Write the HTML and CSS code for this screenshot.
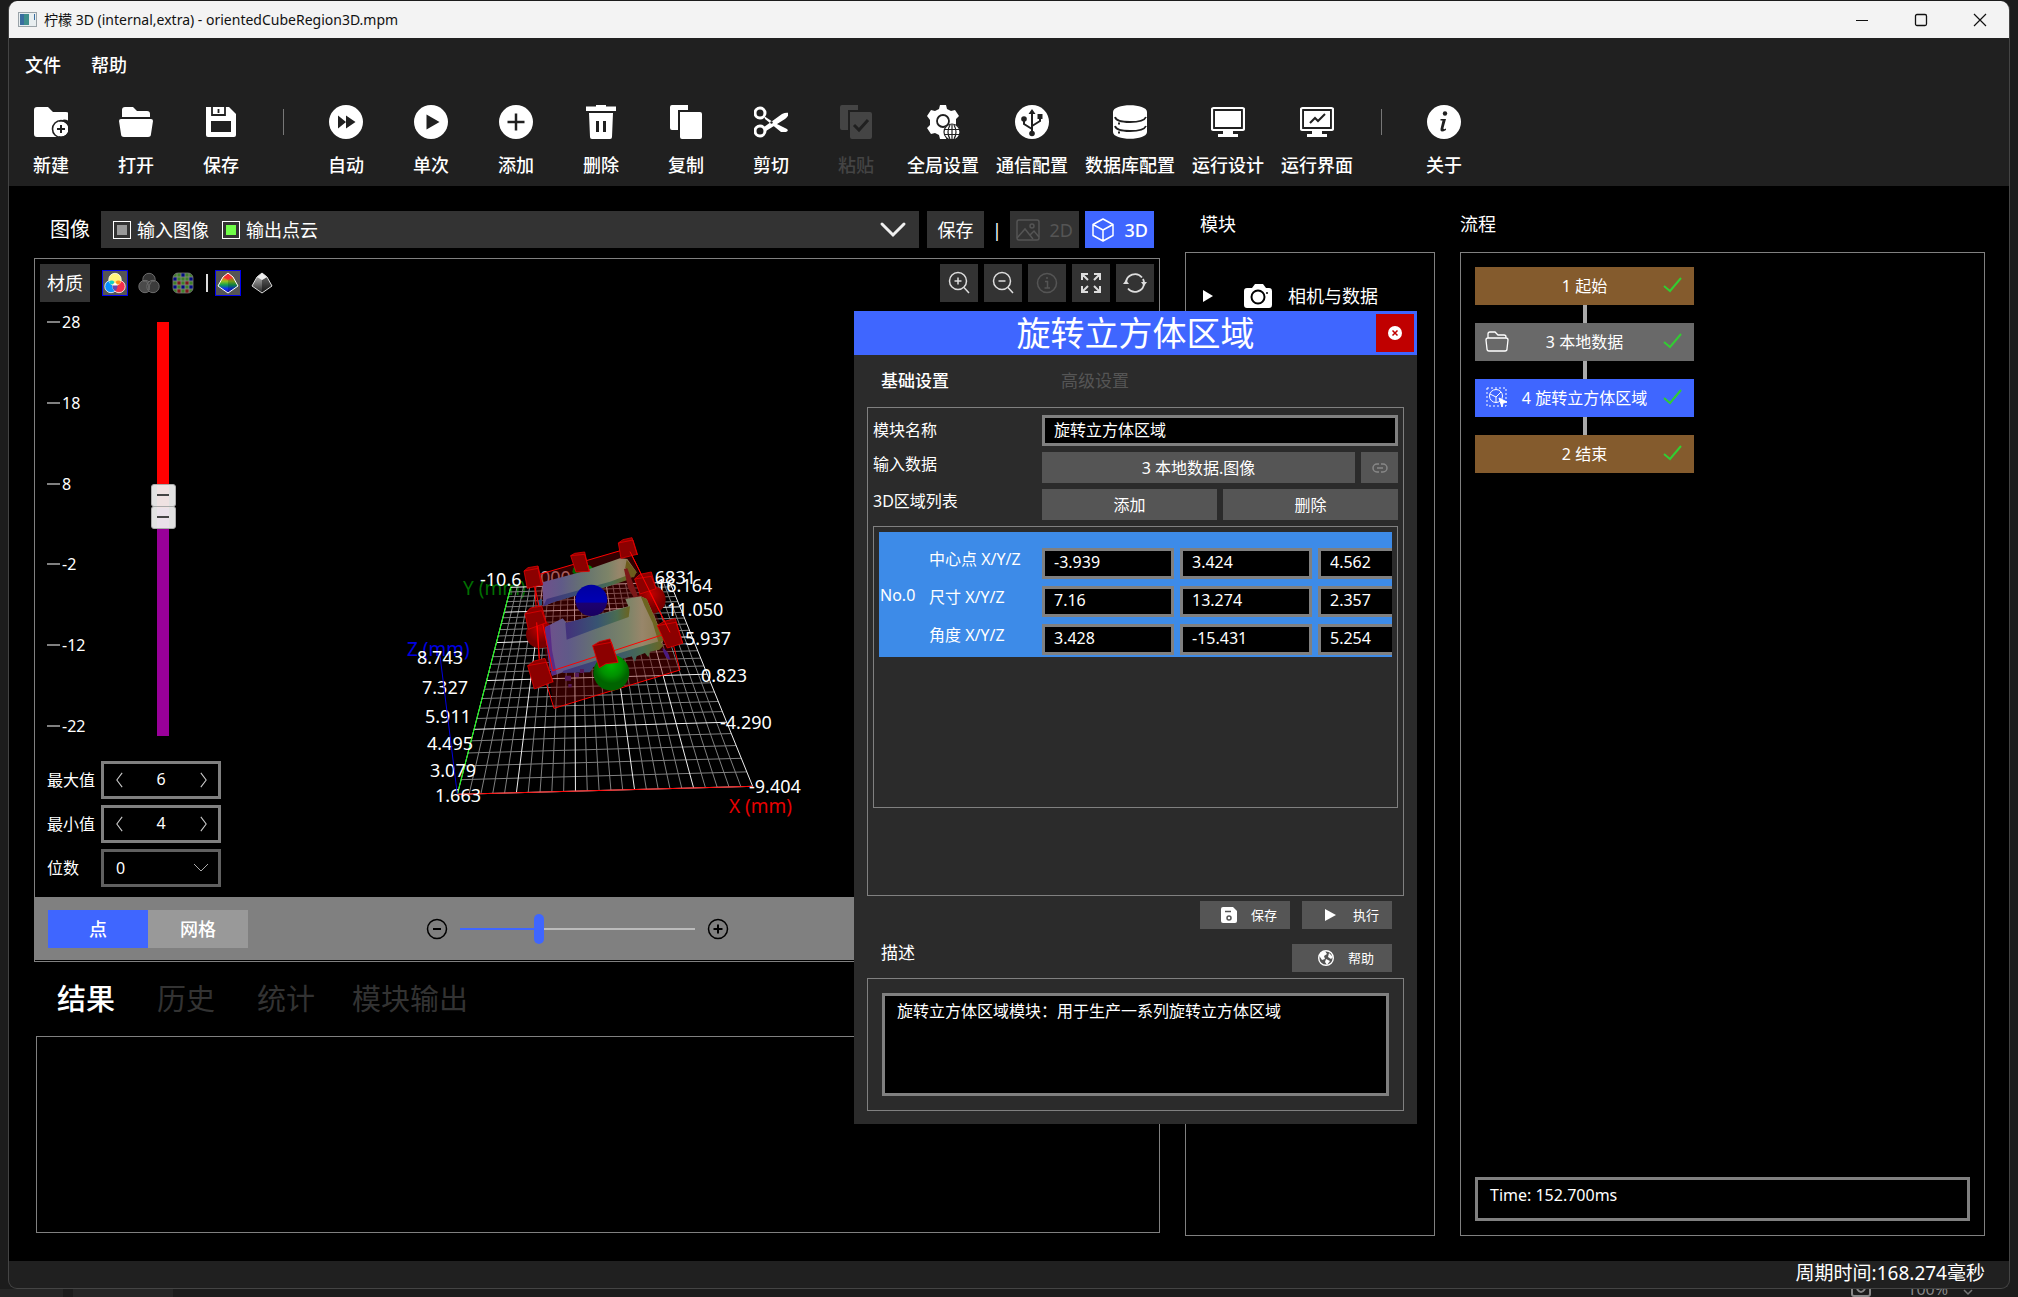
FILE: index.html
```html
<!DOCTYPE html>
<html lang="zh-CN">
<head>
<meta charset="utf-8">
<title>柠檬 3D</title>
<link rel="stylesheet" href="styles.css">
</head>
<body>
<div class="window">
  <header class="titlebar">
    <svg class="app-icon" width="19" height="15" viewBox="0 0 19 15"><rect width="19" height="15" fill="#9aa3a8"/><rect x="1" y="1" width="17" height="13" fill="#e8eef0"/><rect x="2" y="2" width="9" height="11" fill="#3f8f8c"/><rect x="2" y="2" width="4" height="11" fill="#3a6ea0"/><rect x="16" y="2" width="1" height="6" fill="#3a6ea0"/></svg>
    <h1 class="title">柠檬 3D (internal,extra) - orientedCubeRegion3D.mpm</h1>
    <div class="win-buttons">
      <button aria-label="最小化"><svg width="14" height="14" viewBox="0 0 14 14"><path d="M1 7.5h12" stroke="#111"/></svg></button>
      <button aria-label="最大化"><svg width="14" height="14" viewBox="0 0 14 14"><rect x="1.500" y="1.500" width="11" height="11" rx="1.500" fill="none" stroke="#111" stroke-width="1.300"/></svg></button>
      <button aria-label="关闭"><svg width="14" height="14" viewBox="0 0 14 14"><path d="M1 1l12 12M13 1L1 13" stroke="#111" stroke-width="1.200"/></svg></button>
    </div>
  </header>

  <nav class="menubar"><button>文件</button><button>帮助</button></nav>

  <div class="toolbar">
    <button class="tool"><svg viewBox="0 0 34 34"><path d="M3 2h11l5 5h13q3 0 3 3v6a9 9 0 0 0-12 13l2 3H3q-3 0-3-3V5q0-3 3-3z" fill="#fff"/><circle cx="27" cy="24" r="7.500" fill="#fff"/><circle cx="27" cy="24" r="8.500" fill="none" stroke="#202020" stroke-width="1.600"/><path d="M27 20v8M23 24h8" stroke="#202020" stroke-width="2"/></svg>新建</button>
    <button class="tool"><svg viewBox="0 0 34 34"><path d="M3 12V5q0-3 3-3h8l4 4h10q3 0 3 3v3zM2 14h30q2 0 2 2l-2 13q0 3-3 3H5q-3 0-3-3L0 16q0-2 2-2z" fill="#fff"/></svg>打开</button>
    <button class="tool"><svg viewBox="0 0 34 34"><path d="M2 2h23l7 7v21q0 2-2 2H4q-2 0-2-2z" fill="#fff"/><path d="M8 2v8h13V2M14.500 4v4" fill="none" stroke="#202020" stroke-width="1.800"/><rect x="7" y="16" width="20" height="11" fill="#202020"/></svg>保存</button>
    <span class="sep"></span>
    <button class="tool"><svg viewBox="0 0 34 34"><circle cx="17" cy="17" r="17" fill="#fff"/><path d="M9 10.500l8 6.500-8 6.500zM17 10.500l9.500 6.500-9.500 6.500z" fill="#202020"/></svg>自动</button>
    <button class="tool"><svg viewBox="0 0 34 34"><circle cx="17" cy="17" r="17" fill="#fff"/><path d="M12.500 9.500v15L25.500 17z" fill="#202020"/></svg>单次</button>
    <button class="tool"><svg viewBox="0 0 34 34"><circle cx="17" cy="17" r="17" fill="#fff"/><path d="M17 8.500v17M8.500 17h17" stroke="#202020" stroke-width="2.500"/></svg>添加</button>
    <button class="tool"><svg viewBox="0 0 34 34"><path d="M2 1.500h10V0h10v1.500h10V6H2zM5 8h24l-1 24q0 2-2 2H8q-2 0-2-2z" fill="#fff"/><path d="M13.500 16v11M20.500 16v11" stroke="#202020" stroke-width="3"/></svg>删除</button>
    <button class="tool"><svg viewBox="0 0 34 34"><path d="M3 0h16v5H9v20H3q-2 0-2-2V2q0-2 2-2zM12 7h19q2 0 2 2v23q0 2-2 2H13q-2 0-2-2V7z" fill="#fff"/></svg>复制</button>
    <button class="tool"><svg viewBox="0 0 34 34"><g fill="none" stroke="#fff" stroke-width="3"><circle cx="6" cy="8" r="5"/><circle cx="6" cy="26" r="5"/></g><path d="M10 22L28 9q4-2 7-1-1 4-4 6L12 26zM10 11l9 6 14 7q2 2-1 3h-5L11 14z" fill="#fff"/><circle cx="17.500" cy="17.500" r="1.200" fill="#202020"/></svg>剪切</button>
    <button class="tool" disabled><svg viewBox="0 0 34 34"><path d="M3 0h16v5H9v20H3q-2 0-2-2V2q0-2 2-2zM12 7h19q2 0 2 2v23q0 2-2 2H13q-2 0-2-2V7z" fill="#444"/><path d="M15 20l5 5 9-10" fill="none" stroke="#202020" stroke-width="3"/></svg>粘贴</button>
    <button class="tool"><svg viewBox="0 0 34 34"><path d="M13 4l1-4h6l1 4 4 2 4-1 4 6-3 3v6l3 3-3 6-5-1-4 2-1 4h-6l-1-4-4-2-4 1-4-6 3-3v-5L1 11l4-6 4 1z" fill="#fff"/><circle cx="17" cy="16" r="6" fill="none" stroke="#202020" stroke-width="1.800"/><circle cx="26" cy="27" r="8" fill="#fff" stroke="#202020" stroke-width="1.200"/><path d="M18.500 24.500h15M18.500 29.500h15M26 19.500v15M24 20q-4 7 0 14M28 20q4 7 0 14" fill="none" stroke="#202020" stroke-width="1.200"/></svg>全局设置</button>
    <button class="tool"><svg viewBox="0 0 34 34"><circle cx="17" cy="17" r="17" fill="#fff"/><path d="M17 7v22M17 24l-8-5v-5M17 21l8-5v-4" fill="none" stroke="#202020" stroke-width="2"/><path d="M17 4l3.500 5h-7zM22.500 9h5v5h-5z" fill="#202020"/><circle cx="9" cy="14" r="2.800" fill="#202020"/><circle cx="17" cy="28.500" r="2.800" fill="#202020"/></svg>通信配置</button>
    <button class="tool"><svg viewBox="0 0 34 34"><path d="M0 7C0-2 34-2 34 7v20c0 9-34 9-34 0z" fill="#fff"/><path d="M2 12q1 5 15 5t16-5M2 21q1 5 15 5t16-5" fill="none" stroke="#202020" stroke-width="1.800"/><path d="M5 18.500h2M5 27.500h2" stroke="#202020" stroke-width="2"/></svg>数据库配置</button>
    <button class="tool"><svg viewBox="0 0 34 34"><rect x="1" y="3" width="32" height="22" rx="1.500" fill="none" stroke="#fff" stroke-width="2.200"/><rect x="4" y="6" width="26" height="16" fill="#fff"/><path d="M12 26h10v3h5v3H7v-3h5z" fill="#fff"/></svg>运行设计</button>
    <button class="tool"><svg viewBox="0 0 34 34"><rect x="1" y="3" width="32" height="22" rx="1.500" fill="none" stroke="#fff" stroke-width="2.200"/><rect x="4" y="6" width="26" height="16" fill="#fff"/><path d="M10 18l5-5 3 3 7-7" fill="none" stroke="#202020" stroke-width="2"/><path d="M12 26h10v3h5v3H7v-3h5z" fill="#fff"/></svg>运行界面</button>
    <span class="sep"></span>
    <button class="tool"><svg viewBox="0 0 34 34"><circle cx="17" cy="17" r="17" fill="#fff"/><circle cx="18" cy="8.500" r="2.200" fill="#202020"/><path d="M13.500 14h5.500l-2.500 9q-.5 2 2.500.5v1.500q-6 3.500-5.500-1l2-8.500h-2z" fill="#202020"/></svg>关于</button>
  </div>

  <main class="main">
    <section class="left">
      <div class="image-bar">
        <h2 class="image-label">图像</h2>
        <div class="source">
          <label class="swatch"><input type="checkbox" class="gray">输入图像</label>
          <label class="swatch"><input type="checkbox" class="green" checked>输出点云</label>
          <button class="source-open" aria-label="展开"><svg width="28" height="18" viewBox="0 0 28 18"><path d="M3 3l11 11L25 3" fill="none" stroke="#f0f0f0" stroke-width="3" stroke-linecap="round"/></svg></button>
        </div>
        <button class="btn save">保存</button>
        <span class="bar">|</span>
        <div class="modes">
          <button class="btn mode" disabled><svg width="24" height="24" viewBox="0 0 24 24" fill="none" stroke="#555" stroke-width="1.500"><rect x="1" y="2" width="22" height="20" rx="2"/><circle cx="16" cy="8" r="2"/><path d="M1 20l8-9 8 10M14 17l4-4 5 6"/></svg>2D</button>
          <button class="btn mode active"><svg width="24" height="24" viewBox="0 0 24 24" fill="none" stroke="#fff" stroke-width="1.500" stroke-linejoin="round"><path d="M12 1l10 5.500v11L12 23 2 17.500v-11zM2 6.500L12 12l10-5.500M12 12v11"/></svg>3D</button>
        </div>
      </div>

      <div class="viewer">
        <div class="viewer-bar">
          <button class="btn material">材质</button>
          <div class="shades">
            <button class="shade on" aria-label="彩色"><svg viewBox="0 0 22 22"><g stroke="#fff" stroke-width=".8"><circle cx="7" cy="14.500" r="6.200" fill="#0a90ff"/><circle cx="15" cy="14.500" r="6.200" fill="#f5304c"/><circle cx="11" cy="7.500" r="6.200" fill="#fff47c"/></g><path d="M5 9.500q3-2 5.500.5-1 3-4 2.500z" fill="#12d0c8"/><path d="M17 9.500q-3-2-5.500.5 1 3 4 2.500z" fill="#ff9020"/><path d="M9 12.500l2-2 2 2-1 1.500h-2z" fill="#fff"/><path d="M8.500 13.500h5q0 4-2.500 5.500-2.500-1.500-2.500-5.500z" fill="#6448b0"/></svg></button>
            <button class="shade" aria-label="灰色"><svg viewBox="0 0 22 22"><g stroke="#6c6c6c"><circle cx="11" cy="7.500" r="6.200" fill="#333"/><circle cx="7" cy="14.500" r="6.200" fill="#4a4a4a"/><circle cx="15" cy="14.500" r="6.200" fill="#3c3c3c"/><path d="M5 9q6-1 6 9M17 9q-6-1-6 9" fill="none"/></g></svg></button>
            <button class="shade" aria-label="纹理"><svg viewBox="0 0 22 22"><rect x="1" y="1" width="20" height="20" rx="5" fill="#3f8028"/><path d="M2 5h3v4H1V6zM9 1h4v4H9zM9 5h0M17 5h4v4h-4zM5 5h0M1 13h4v4H1zM9 13h4v4H9zM17 13h4v4h-4zM5 1v4" fill="#000c80"/><path d="M5 9h4v4H5zM13 9h4v4h-4zM5 17h4v4H5zM13 17h4v4h-4z" fill="#7c1818"/><path d="M5 1v20M9 1v20M13 1v20M17 1v20M1 5h20M1 9h20M1 13h20M1 17h20" stroke="#888" stroke-width=".8"/><rect x="1" y="1" width="20" height="20" rx="5" fill="none" stroke="#777" stroke-width=".8"/></svg></button>
            <span class="shade-sep"></span>
            <button class="shade on" aria-label="彩色高度"><svg viewBox="0 0 22 22"><defs><linearGradient id="rainbow" x1="0" y1="0" x2="0" y2="1"><stop offset="0" stop-color="#f02020"/><stop offset=".25" stop-color="#f07020"/><stop offset=".42" stop-color="#90c020"/><stop offset=".6" stop-color="#10a050"/><stop offset=".78" stop-color="#1030f0"/><stop offset="1" stop-color="#2010c0"/></linearGradient></defs><path d="M11 1l5 4 5 9-10 7L1 14l5-9z" fill="url(#rainbow)"/><path d="M11 8l5-3 5 9-10 7z" fill="#000" fill-opacity=".2"/><path d="M11 1l5 4-5 3-5-3z" fill="#f23030"/><path d="M11 1l5 4 5 9-10 7L1 14l5-9z" fill="none" stroke="#fff"/></svg></button>
            <button class="shade" aria-label="灰色高度"><svg viewBox="0 0 22 22"><defs><linearGradient id="gray" x1="0" y1="0" x2="0" y2="1"><stop offset="0" stop-color="#ccc"/><stop offset="1" stop-color="#222"/></linearGradient></defs><path d="M11 1l5 4 5 9-10 7L1 14l5-9z" fill="url(#gray)"/><path d="M11 8l5-3 5 9-10 7z" fill="#000" fill-opacity=".45"/><path d="M11 1l5 4-5 3-5-3z" fill="#eee"/><path d="M11 1l5 4 5 9-10 7L1 14l5-9z" fill="none" stroke="#ddd"/></svg></button>
          </div>
          <div class="view-tools">
            <button class="btn vt" aria-label="放大"><svg viewBox="0 0 24 24"><circle cx="11" cy="10" r="8.500"/><path d="M17 16.500l5 5.500M11 6.500v7M7.500 10h7"/></svg></button>
            <button class="btn vt" aria-label="缩小"><svg viewBox="0 0 24 24"><circle cx="11" cy="10" r="8.500"/><path d="M17 16.500l5 5.500M7.500 10h7"/></svg></button>
            <button class="btn vt" aria-label="信息" disabled><svg viewBox="0 0 24 24"><circle cx="12" cy="12" r="9.500"/><path d="M10 10.500h2.500V17M9.500 17h5.500M12 6v2"/></svg></button>
            <button class="btn vt" aria-label="全屏"><svg viewBox="0 0 24 24"><path d="M3 9V3h6M3 3l6 6M21 9V3h-6M21 3l-6 6M3 15v6h6M3 21l6-6M21 15v6h-6M21 21l-6-6" stroke-width="2"/></svg></button>
            <button class="btn vt" aria-label="重置"><svg viewBox="0 0 24 24"><path d="M3 12a9 9 0 0 1 16-5.500M21 12a9 9 0 0 1-16 5.500M3 12a9 9 0 0 1 1-4M21 12a9 9 0 0 0-1-4" stroke-width="1.800"/><path d="M0 13l3-4 3 4zM18 11l3 4 3-4z" fill="#ddd" stroke="none"/></svg></button>
          </div>
        </div>

        <div class="view-body">
          <div class="levels">
            <div class="level-top">
              <ul class="scale"><li>28</li><li>18</li><li>8</li><li>-2</li><li>-12</li><li>-22</li></ul>
              <div class="level-slider">
                <input type="range" min="-22" max="28" step="any" value="7.300" aria-label="最大值">
                <input type="range" min="-22" max="28" step="any" value="4.500" aria-label="最小值">
              </div>
            </div>
            <div class="field"><label for="vmax">最大值</label><div class="spin"><button aria-label="减"><svg viewBox="0 0 10 18"><path d="M8 1L2 9l6 8"/></svg></button><input id="vmax" value="6"><button aria-label="加"><svg viewBox="0 0 10 18"><path d="M2 1l6 8-6 8"/></svg></button></div></div>
            <div class="field"><label for="vmin">最小值</label><div class="spin"><button aria-label="减"><svg viewBox="0 0 10 18"><path d="M8 1L2 9l6 8"/></svg></button><input id="vmin" value="4"><button aria-label="加"><svg viewBox="0 0 10 18"><path d="M2 1l6 8-6 8"/></svg></button></div></div>
            <div class="field"><label for="digits">位数</label><div class="pick"><select id="digits"><option>0</option><option>1</option><option>2</option></select><svg width="16" height="10" viewBox="0 0 16 10"><path d="M1 1l7 7 7-7" fill="none" stroke="#aaa"/></svg></div></div>
          </div>

          <svg class="scene" width="460" height="320" viewBox="0 0 460 320" role="img" aria-label="点云">
            <defs>
              <linearGradient id="cloud" x1="0" x2="1"><stop offset="0" stop-color="#70508c"/><stop offset=".2" stop-color="#605a88"/><stop offset=".45" stop-color="#66746f"/><stop offset=".7" stop-color="#7d8468"/><stop offset=".82" stop-color="#98866a"/><stop offset="1" stop-color="#8a7a50"/></linearGradient>
              <linearGradient id="side" x1="0" x2="1"><stop offset="0" stop-color="#43307c"/><stop offset=".5" stop-color="#385472"/><stop offset=".8" stop-color="#4a6c50"/><stop offset="1" stop-color="#6d6420"/></linearGradient>
              <radialGradient id="gball" cx=".5" cy=".3"><stop offset="0" stop-color="#00b400"/><stop offset=".6" stop-color="#009000"/><stop offset="1" stop-color="#006400"/></radialGradient>
              <linearGradient id="bball" x1="0" y1="0" x2="0" y2="1"><stop offset="0" stop-color="#0000a0"/><stop offset=".55" stop-color="#0000b4"/><stop offset=".6" stop-color="#1c0070"/><stop offset="1" stop-color="#180060"/></linearGradient>
              <radialGradient id="rball" cx=".5" cy=".3"><stop offset="0" stop-color="#c00000"/><stop offset="1" stop-color="#780000"/></radialGradient>
            </defs>
            <g class="axis"><text x="83" y="76" fill="#007000">Y (mm)</text><text x="27" y="137" fill="#0000e0">Z (mm)</text></g>
            <g transform="scale(.33333)">
              <g id="grid"></g>
              <path d="M232 826L1118 802" stroke="red" stroke-width="3"/>
              <path d="M232 826L392 205" stroke="#0f0" stroke-width="3"/>
            </g>
            <g fill="#fff">
              <text x="100" y="67">-10.6</text><text x="160" y="65" fill="#c9a0a0">000</text><text x="270" y="65">.6831</text><text x="276" y="73">16.164</text><text x="287" y="97">11.050</text><text x="305" y="126">5.937</text><text x="321" y="163">0.823</text><text x="340" y="210">-4.290</text><text x="369" y="274">-9.404</text>
              <text x="37" y="145">8.743</text><text x="42" y="175">7.327</text><text x="45" y="204">5.911</text><text x="47" y="231">4.495</text><text x="50" y="258">3.079</text><text x="55" y="283">1.663</text>
            </g>
            <g class="axis"><text x="349" y="294" fill="#e60000">X (mm)</text></g>
            <g transform="scale(.33333)">
              <path d="M180 410L232 826" stroke="#0000e0" stroke-width="3"/>
              <path d="M458 172L745 88 900 453 522 568z" fill="#780000" fill-opacity=".42"/>
              <circle cx="815" cy="242" r="42" fill="url(#rball)"/><circle cx="480" cy="346" r="42" fill="url(#rball)"/>
              <path d="M577 158q0-22 32-22t32 22q0 10-32 10t-32-10z" fill="url(#gball)"/>
              <path d="M487 190L600 160 720 118 742 120 770 160 755 175 690 200 530 245 490 262z" fill="url(#cloud)"/>
              <path d="M740 122l30 38-8 15-14 0-12-30z" fill="#6d5c1c"/>
              <path d="M500 240L690 188 745 168 745 182 690 200 520 250 490 262z" fill="url(#side)"/>
              <path d="M472 245l14-6v20l-10 2z" fill="#2e5578"/>
              <path d="M732 150l10-2 32 84-10 8-20-34z" fill="#7c1818"/>
              <path d="M495 325L548 298 560 312 745 262 736 240 782 232 800 240 835 320 850 365 840 382 770 408 600 445 516 470 505 420z" fill="url(#cloud)"/>
              <path d="M782 232l18 8 34 80 16 45-14 6-18-60-24-50z" fill="#6d6420"/>
              <path d="M556 312L700 276 750 262 746 294 640 332 560 362z" fill="url(#side)"/>
              <path d="M495 325l10 95 11 50 14-6-14-70-6-76z" fill="#5a2c86"/>
              <path d="M548 456L770 386 840 366 850 380 838 392 810 398 805 415 795 402 770 412 765 428 755 412 640 444 630 460 550 462z" fill="url(#side)"/>
              <path d="M555 470h18v15h-18zM585 462h12v12h-12zM565 495h10v10h-10zM600 450h12v12h-12z" fill="#551a58"/>
              <path d="M847 388q18 5 24 34-16 0-24-34z" fill="#4a1a80"/>
              <ellipse cx="634" cy="244" rx="48" ry="47" fill="url(#bball)"/>
              <g fill="none" stroke="red" stroke-width="3"><path d="M458 172L745 88 870 340 518 455zM870 340L900 453 522 568 495 480M463 180l15 245"/></g>
              <g fill="#8c0000" stroke="#e00000" stroke-width="2.500" stroke-linejoin="round">
                <path d="M432 156l12-10 30-5 10 42 4 14-46 11zM432 156l42-8 10 48M474 148v-6"/>
                <path d="M715 72l14-10 27-6 15 50-48 12zM715 72l44-9 14 45"/>
                <path d="M572 110l12-7 30-4 8 36 6 22-40 2zM572 110l42-4 14 50"/>
                <path d="M764 180l16-14 34-7 14 50-48 16zM764 180l50-8 14 36"/>
                <path d="M435 285l16-18 34-6 14 50-54 20zM435 285l50-10 14 40"/>
                <path d="M832 320l20-13 34-8 22 74-46 14zM832 320l56-10 20 62"/>
                <path d="M443 440l20-14 32-8 24 70-56 22zM443 440l56-10 20 60"/>
              </g>
              <circle cx="694" cy="461" r="54" fill="url(#gball)"/>
              <path d="M638 380l20-12 32-8 24 70-36 4-20 12zM638 380l56-10 20 60" fill="#8c0000" stroke="#e00000" stroke-width="2.500"/>
              <path d="M750 98L808 215 870 340M470 310l8 108" fill="none" stroke="red" stroke-width="3"/>
            </g>
          </svg>
        </div>

        <div class="viewer-foot">
          <div class="seg"><button class="on">点</button><button>网格</button></div>
          <div class="zoomer">
            <button aria-label="减小"><svg width="22" height="22" viewBox="0 0 22 22"><circle cx="11" cy="11" r="9.500" fill="none" stroke="#000" stroke-width="1.500"/><path d="M7 11h8" stroke="#000" stroke-width="2"/></svg></button>
            <input type="range" min="0" max="100" value="33" aria-label="点大小">
            <button aria-label="增大"><svg width="22" height="22" viewBox="0 0 22 22"><circle cx="11" cy="11" r="9.500" fill="none" stroke="#000" stroke-width="1.500"/><path d="M6.500 11h9M11 6.500v9" stroke="#000" stroke-width="2"/></svg></button>
          </div>
        </div>
      </div>

      <nav class="tabs"><button class="on">结果</button><button>历史</button><button>统计</button><button>模块输出</button></nav>
      <div class="results"></div>
    </section>

    <section class="column">
      <h2>模块</h2>
      <div class="panel modules">
        <button class="module"><svg width="10" height="12" viewBox="0 0 10 12"><path d="M0 0l10 6-10 6z" fill="#fff"/></svg><svg class="cam" width="28" height="24" viewBox="0 0 28 24"><path d="M3 4h5l3-4h8l3 4h3q3 0 3 3v14q0 3-3 3H3q-3 0-3-3V7q0-3 3-3z" fill="#fff"/><circle cx="14" cy="13" r="6.500" fill="none" stroke="#000" stroke-width="2"/><path d="M22 9h2" stroke="#000" stroke-width="1.500"/></svg>相机与数据</button>
      </div>
    </section>

    <section class="column">
      <h2>流程</h2>
      <div class="panel flow">
        <ol class="nodes">
          <li><button class="node end"><span>1 起始</span><svg class="ok" viewBox="0 0 19 16"><path d="M1 9l6 5L18 1"/></svg></button></li>
          <li><button class="node data"><svg class="kind" viewBox="0 0 24 22"><path d="M3 8V4q0-2 2-2h5l3 3h6q2 0 2 2v1M1 10q0-2 2-2h18q2 0 2 2l-1 9q0 2-2 2H4q-2 0-2-2z"/></svg><span>3 本地数据</span><svg class="ok" viewBox="0 0 19 16"><path d="M1 9l6 5L18 1"/></svg></button></li>
          <li><button class="node active"><svg class="kind" viewBox="0 0 24 22"><path d="M2 2h19v18H2z" stroke-dasharray="2 2"/><circle cx="11" cy="10" r="6.500"/><path d="M5 8l6 3 5-5M11 11v6"/><path d="M14 12l8 4-4 1-1 4z" fill="#fff"/></svg><span>4 旋转立方体区域</span><svg class="ok" viewBox="0 0 19 16"><path d="M1 9l6 5L18 1"/></svg></button></li>
          <li><button class="node end"><span>2 结束</span><svg class="ok" viewBox="0 0 19 16"><path d="M1 9l6 5L18 1"/></svg></button></li>
        </ol>
        <output class="time">Time: 152.700ms</output>
      </div>
    </section>
  </main>

  <footer class="status">周期时间:168.274毫秒</footer>

  <section class="dialog" role="dialog" aria-labelledby="dlg-title">
    <header class="dlg-head"><h2 id="dlg-title">旋转立方体区域</h2><button class="close" aria-label="关闭"><svg width="14" height="14" viewBox="0 0 14 14"><circle cx="7" cy="7" r="7" fill="#fff"/><path d="M4.500 4.500l5 5M9.500 4.500l-5 5" stroke="#c00000" stroke-width="1.500"/></svg></button></header>
    <nav class="dlg-tabs"><button class="on">基础设置</button><button>高级设置</button></nav>
    <div class="group">
      <div class="row"><label class="tall" for="mname">模块名称</label><input id="mname" class="box" value="旋转立方体区域"></div>
      <div class="row"><span>输入数据</span><div class="pair link-pair"><button class="gbtn">3 本地数据.图像</button><button class="gbtn" aria-label="链接" disabled><svg width="16" height="10" viewBox="0 0 16 10"><path d="M7 1H5a4 4 0 0 0 0 8h2M9 1h2a4 4 0 0 1 0 8H9M5 5h6" fill="none" stroke="#888" stroke-width="1.500"/></svg></button></div></div>
      <div class="row"><span>3D区域列表</span><div class="pair"><button class="gbtn">添加</button><button class="gbtn">删除</button></div></div>
      <div class="list">
        <div class="region">
          <span class="no">No.0</span>
          <div class="coords">
            <span>中心点 X/Y/Z</span><input class="box" aria-label="中心点 X" value="-3.939"><input class="box" aria-label="中心点 Y" value="3.424"><input class="box" aria-label="中心点 Z" value="4.562">
            <span>尺寸 X/Y/Z</span><input class="box" aria-label="尺寸 X" value="7.16"><input class="box" aria-label="尺寸 Y" value="13.274"><input class="box" aria-label="尺寸 Z" value="2.357">
            <span>角度 X/Y/Z</span><input class="box" aria-label="角度 X" value="3.428"><input class="box" aria-label="角度 Y" value="-15.431"><input class="box" aria-label="角度 Z" value="5.254">
          </div>
        </div>
      </div>
    </div>
    <div class="actions">
      <button class="gbtn small"><svg width="16" height="16" viewBox="0 0 16 16"><path d="M2 0h10l4 4v10q0 2-2 2H2q-2 0-2-2V2q0-2 2-2z" fill="#fff"/><path d="M4 4.500h6" stroke="#555" stroke-width="1.500"/><circle cx="8" cy="11" r="2" fill="none" stroke="#555" stroke-width="1.500"/></svg>保存</button>
      <button class="gbtn small"><svg width="16" height="16" viewBox="0 0 16 16"><path d="M2 2l11 6-11 6z" fill="#fff"/></svg>执行</button>
    </div>
    <div class="desc-head"><h3>描述</h3><button class="gbtn small wide"><svg width="16" height="16" viewBox="0 0 16 16"><circle cx="8" cy="8" r="7.300" fill="none" stroke="#fff" stroke-width="1.400"/><path d="M2 3l5-2 2 3-3 2 1 3-3 1-2-3zM11 3l4 4-2 2-3-2zM8 9l4 2-3 4-2-3z" fill="#fff"/></svg>帮助</button></div>
    <div class="desc"><textarea class="box" aria-label="描述" readonly>旋转立方体区域模块：用于生产一系列旋转立方体区域</textarea></div>
  </section>
</div>
<div class="behind"><i class="p1"></i><i class="p2"></i><svg width="20" height="8" viewBox="0 0 20 8"><path d="M1 0v5q0 2 2 2h14q2 0 2-2V0M6 0q4 6 8 0" fill="none" stroke="#888" stroke-width="2"/></svg><span>100%</span><svg width="12" height="8" viewBox="0 0 12 8"><path d="M2 1l4 4 4-4" fill="none" stroke="#777" stroke-width="1.500"/></svg></div>
<script src="scene.js"></script>
</body>
</html>
```
FILE: styles.css
```css
* { box-sizing: border-box; }
body { margin: 0; min-height: 100vh; display: flex; flex-direction: column; background: #1c1c1c; color: #fff; font: 18px/24px "Noto Sans", "Noto Sans CJK SC", sans-serif; }
button { margin: 0; padding: 0; border: 0; background: none; color: inherit; font: inherit; }
input, select, textarea { font: inherit; color: inherit; margin: 0; border-radius: 0; }
h1, h2, h3, ul, ol { margin: 0; padding: 0; font-size: inherit; font-weight: 400; list-style: none; }
svg { display: block; flex: none; }

.window { position: relative; flex: 1; display: flex; flex-direction: column; margin: 1px 8px 0; border: 1px solid #444; border-top: 0; border-radius: 9px; overflow: hidden; background: #202020; }
.titlebar { display: flex; align-items: center; height: 37px; background: #f3f3f3; color: #111; padding-left: 9px; }
.title { flex: 1; margin-left: 7px; font-size: 14px; }
.win-buttons { display: flex; }
.win-buttons button { width: 59px; height: 36px; display: grid; place-items: center; }
.menubar { display: flex; gap: 30px; padding: 15px 16px 0; height: 54px; font-weight: 500; }
.menubar button { height: 24px; }
.toolbar { display: flex; gap: 17px; padding: 13px 8px 0; height: 94px; font-weight: 500; }
.tool { display: flex; flex-direction: column; align-items: center; gap: 14px; min-width: 68px; height: 74px; white-space: nowrap; }
.tool svg { width: 34px; height: 34px; }
.tool:disabled { color: #444; }
.sep { width: 23px; height: 26px; margin-top: 4px; background: linear-gradient(#777, #777) center / 1px 100% no-repeat; }

.main { flex: 1; display: grid; grid-template-columns: minmax(0, 1fr) 250px 525px; gap: 25px; padding: 25px 24px 25px 25px; background: #000; }
.left { display: flex; flex-direction: column; min-width: 0; }
.image-bar { display: flex; align-items: center; height: 37px; margin: 0 6px 10px 16px; }
.image-label { width: 51px; font-size: 20px; }
.source { flex: 1; display: flex; align-items: center; gap: 13px; height: 37px; padding: 0 12px; background: #333; }
.source-open { margin-left: auto; }
.swatch { display: flex; align-items: center; gap: 6px; }
.swatch input { appearance: none; width: 18px; height: 18px; border: 1px solid #fff; padding: 3px; background: #999 content-box; }
.swatch .green { background-color: #70ff48; }
.btn { background: #333; }
.save { width: 57px; height: 37px; margin-left: 8px; }
.bar { width: 26px; text-align: center; }
.modes { display: flex; gap: 6px; }
.mode { display: flex; align-items: center; justify-content: space-between; width: 69px; height: 37px; padding: 0 6px; }
.mode:disabled { color: #555; }
.mode.active { background: #3f66ff; font-weight: 500; }

.viewer { flex: 1; display: flex; flex-direction: column; border: 1px solid #808080; }
.viewer-bar { display: flex; align-items: center; padding: 5px 5px 0; }
.material { width: 50px; height: 38px; }
.shades { display: flex; align-items: center; gap: 8px; margin-left: 12px; }
.shade { width: 26px; height: 26px; padding: 1px; border: 1px solid transparent; }
.shade svg { width: 22px; height: 22px; }
.shade.on { background: #555; border-color: #0000f0; }
.shade-sep { width: 2px; height: 18px; margin: 0 -1px 0 2px; background: #ddd; }
.view-tools { display: flex; gap: 6px; margin-left: auto; }
.vt { width: 38px; height: 38px; display: grid; place-items: center; }
.vt svg { width: 24px; height: 24px; fill: none; stroke: #ddd; stroke-width: 1.5; }
.vt:disabled svg { stroke: #555; }
.view-body { flex: 1; display: flex; }
.levels { width: 188px; padding-left: 12px; }
.level-top { display: flex; height: 459px; padding-top: 8px; }
.scale { width: 103px; height: 428px; display: flex; flex-direction: column; justify-content: space-between; font-size: 16px; }
.scale li { display: flex; align-items: center; gap: 2px; height: 24px; }
.scale li::before { content: ""; width: 13px; height: 2px; background: #808080; }
.level-slider { display: grid; width: 26px; height: 414px; margin-top: 12px; background: linear-gradient(red 45%, #909 45%) center / 12px 100% no-repeat; }
.level-slider input { grid-area: 1 / 1; appearance: none; writing-mode: vertical-lr; direction: rtl; width: 26px; height: 414px; background: none; pointer-events: none; }
.level-slider input::-webkit-slider-thumb { appearance: none; width: 25px; height: 23px; border: 1px solid #aaa; border-radius: 3px; background: linear-gradient(#444, #444) center / 12px 2px no-repeat, #eeeeeef2; pointer-events: auto; }
.field { display: flex; align-items: center; height: 38px; margin-bottom: 6px; font-size: 16px; }
.field label { width: 54px; }
.spin, .pick { display: flex; align-items: center; width: 120px; height: 38px; border: 3px solid #808080; background: #000; }
.spin button { width: 30px; display: grid; place-items: center; }
.spin svg { width: 9px; height: 16px; fill: none; stroke: #ccc; stroke-width: 1.2; }
.spin input { width: 54px; padding: 0 0 3px; border: 0; background: none; text-align: center; }
.pick { position: relative; border-color: #606060; }
.pick select { appearance: none; width: 100%; height: 32px; padding: 0 12px; border: 0; background: none; }
.pick svg { position: absolute; right: 9px; pointer-events: none; }
.scene { margin: 217px 0 0 157px; font-size: 18px; }
.scene .axis { font-size: 19px; }
.viewer-foot { display: flex; align-items: center; height: 64px; padding: 0 13px; background: #808080; border-bottom: 1px solid #000; }
.seg { display: flex; }
.seg button { width: 100px; height: 38px; background: #999; font-weight: 500; }
.seg .on { background: #3f66ff; }
.zoomer { display: flex; align-items: center; gap: 12px; margin-left: 178px; }
.zoomer input { appearance: none; width: 235px; height: 30px; background: linear-gradient(90deg, #3f66ff 33%, #bbb 33%) center / 100% 2px no-repeat; }
.zoomer input::-webkit-slider-thumb { appearance: none; width: 10px; height: 30px; border-radius: 5px; background: #3f66ff; }
.tabs { display: flex; align-items: center; height: 74px; padding-left: 2px; font-size: 29px; line-height: 36px; }
.tabs button { min-width: 100px; padding: 0 16px; color: #333; }
.tabs .on { color: #fff; font-weight: 500; }
.results { height: 197px; margin: 0 0 3px 2px; border: 1px solid #808080; }

.column { display: flex; flex-direction: column; }
.column h2 { height: 41px; line-height: 26px; }
.column:nth-child(2) h2 { padding-left: 15px; }
.panel { flex: 1; border: 1px solid #808080; }
.modules { padding: 31px 17px; }
.module { display: flex; align-items: center; }
.cam { margin: 0 16px 0 31px; }
.flow { display: flex; flex-direction: column; padding: 14px; font-size: 16px; }
.nodes { width: 219px; }
.nodes li { display: flex; flex-direction: column; align-items: center; }
.nodes li + li::before { content: ""; width: 4px; height: 18px; background: #aaa; }
.node { position: relative; width: 219px; height: 38px; }
.node.end { background: #845b2d; }
.node.data { background: #696969; }
.node.active { background: #3f66ff; }
.kind, .ok { position: absolute; fill: none; }
.kind { left: 10px; top: 7px; width: 24px; height: 22px; stroke: #fff; stroke-width: 1.3; }
.active .kind { stroke-width: 1; }
.ok { right: 12px; top: 10px; width: 19px; height: 16px; stroke: #32cd32; stroke-width: 2; }
.time { margin-top: auto; height: 44px; padding: 3px 12px; border: 3px solid #808080; }
.status { height: 27px; padding-right: 24px; text-align: right; font-size: 19px; }

.dialog { position: absolute; top: 310px; right: 592px; width: 563px; padding-bottom: 13px; background: #2b2b2b; font-size: 16px; }
.dlg-head { position: relative; height: 44px; background: #3f66ff; text-align: center; font-size: 34px; line-height: 44px; }
.close { position: absolute; right: 3px; top: 3px; width: 38px; height: 38px; display: grid; place-items: center; background: #c00000; }
.dlg-tabs { display: flex; height: 52px; padding-left: 27px; font-size: 17px; }
.dlg-tabs button { width: 180px; text-align: left; color: #555; }
.dlg-tabs .on { color: #fff; font-weight: 500; }
.group { margin: 0 13px; height: 489px; padding: 7px 5px; border: 1px solid #808080; }
.row { display: grid; grid-template-columns: 169px 1fr; margin-bottom: 6px; }
.row .tall { line-height: 31px; }
.box { height: 31px; padding: 0 9px 4px; border: 3px solid #808080; background: #000; outline: 0; min-width: 0; }
.pair { display: grid; grid-template-columns: 1fr 1fr; gap: 6px; }
.link-pair { grid-template-columns: 1fr 37px; }
.gbtn { display: flex; align-items: center; justify-content: center; height: 31px; background: #555; }
.list { height: 282px; padding: 5px; border: 1px solid #808080; }
.region { display: flex; align-items: center; height: 125px; overflow: hidden; background: #3d8be8; }
.no { flex: none; width: 50px; padding-left: 1px; }
.coords { flex: none; display: grid; grid-template-columns: 107px repeat(3, 132px); grid-auto-rows: 31px; gap: 7px 6px; padding-top: 14px; }
.coords span { line-height: 22px; }
.actions { display: flex; justify-content: flex-end; gap: 12px; margin: 5px 25px 0; }
.small { width: 90px; height: 28px; gap: 14px; padding-left: 8px; font-size: 13px; }
.wide { width: 100px; }
.desc-head { display: flex; justify-content: space-between; margin: 15px 25px 6px 27px; font-size: 17px; }
.desc-head h3 { line-height: 18px; }
.desc { margin: 0 13px; height: 133px; padding: 14px; border: 1px solid #808080; }
.desc textarea { display: block; width: 100%; height: 103px; padding: 3px 12px; resize: none; }

.behind { display: flex; height: 8px; overflow: hidden; color: #888; font-size: 16px; line-height: 8px; }
.behind i { width: 63px; margin-right: 10px; background: #262626; }
.behind .p2 { width: 100px; }
.behind svg { margin-left: auto; }
.behind span { margin: -4px 14px 0 36px; }
.behind span + svg { margin: 0 44px 0 0; }
```
FILE: scene.js
```js
// Draws the ground grid: 25 cells per side in perspective, a bright line every fifth.
const NS = "http://www.w3.org/2000/svg";
const nearL = [232, 826], nearR = [1118, 802], farL = [392, 205], farR = [870, 190];

function mix(a, b, t) {
  return [a[0] + (b[0] - a[0]) * t, a[1] + (b[1] - a[1]) * t];
}

function line(a, b, major) {
  const el = document.createElementNS(NS, "path");
  el.setAttribute("d", "M" + a.join(" ") + "L" + b.join(" "));
  el.setAttribute("stroke", major ? "#f0f0f0" : "#808080");
  el.setAttribute("stroke-width", 3);
  document.getElementById("grid").appendChild(el);
}

function drawLine(i, major) {
  const t = i / 25;
  const s = 1.831 * t / (1 + 0.831 * t);
  line(mix(nearL, nearR, t), mix(farL, farR, t), major);
  line(mix(nearL, farL, s), mix(nearR, farR, s), major);
}

for (let i = 0; i <= 25; i++) if (i % 5 !== 0) drawLine(i, false);
for (let i = 0; i <= 25; i += 5) drawLine(i, true);
```
